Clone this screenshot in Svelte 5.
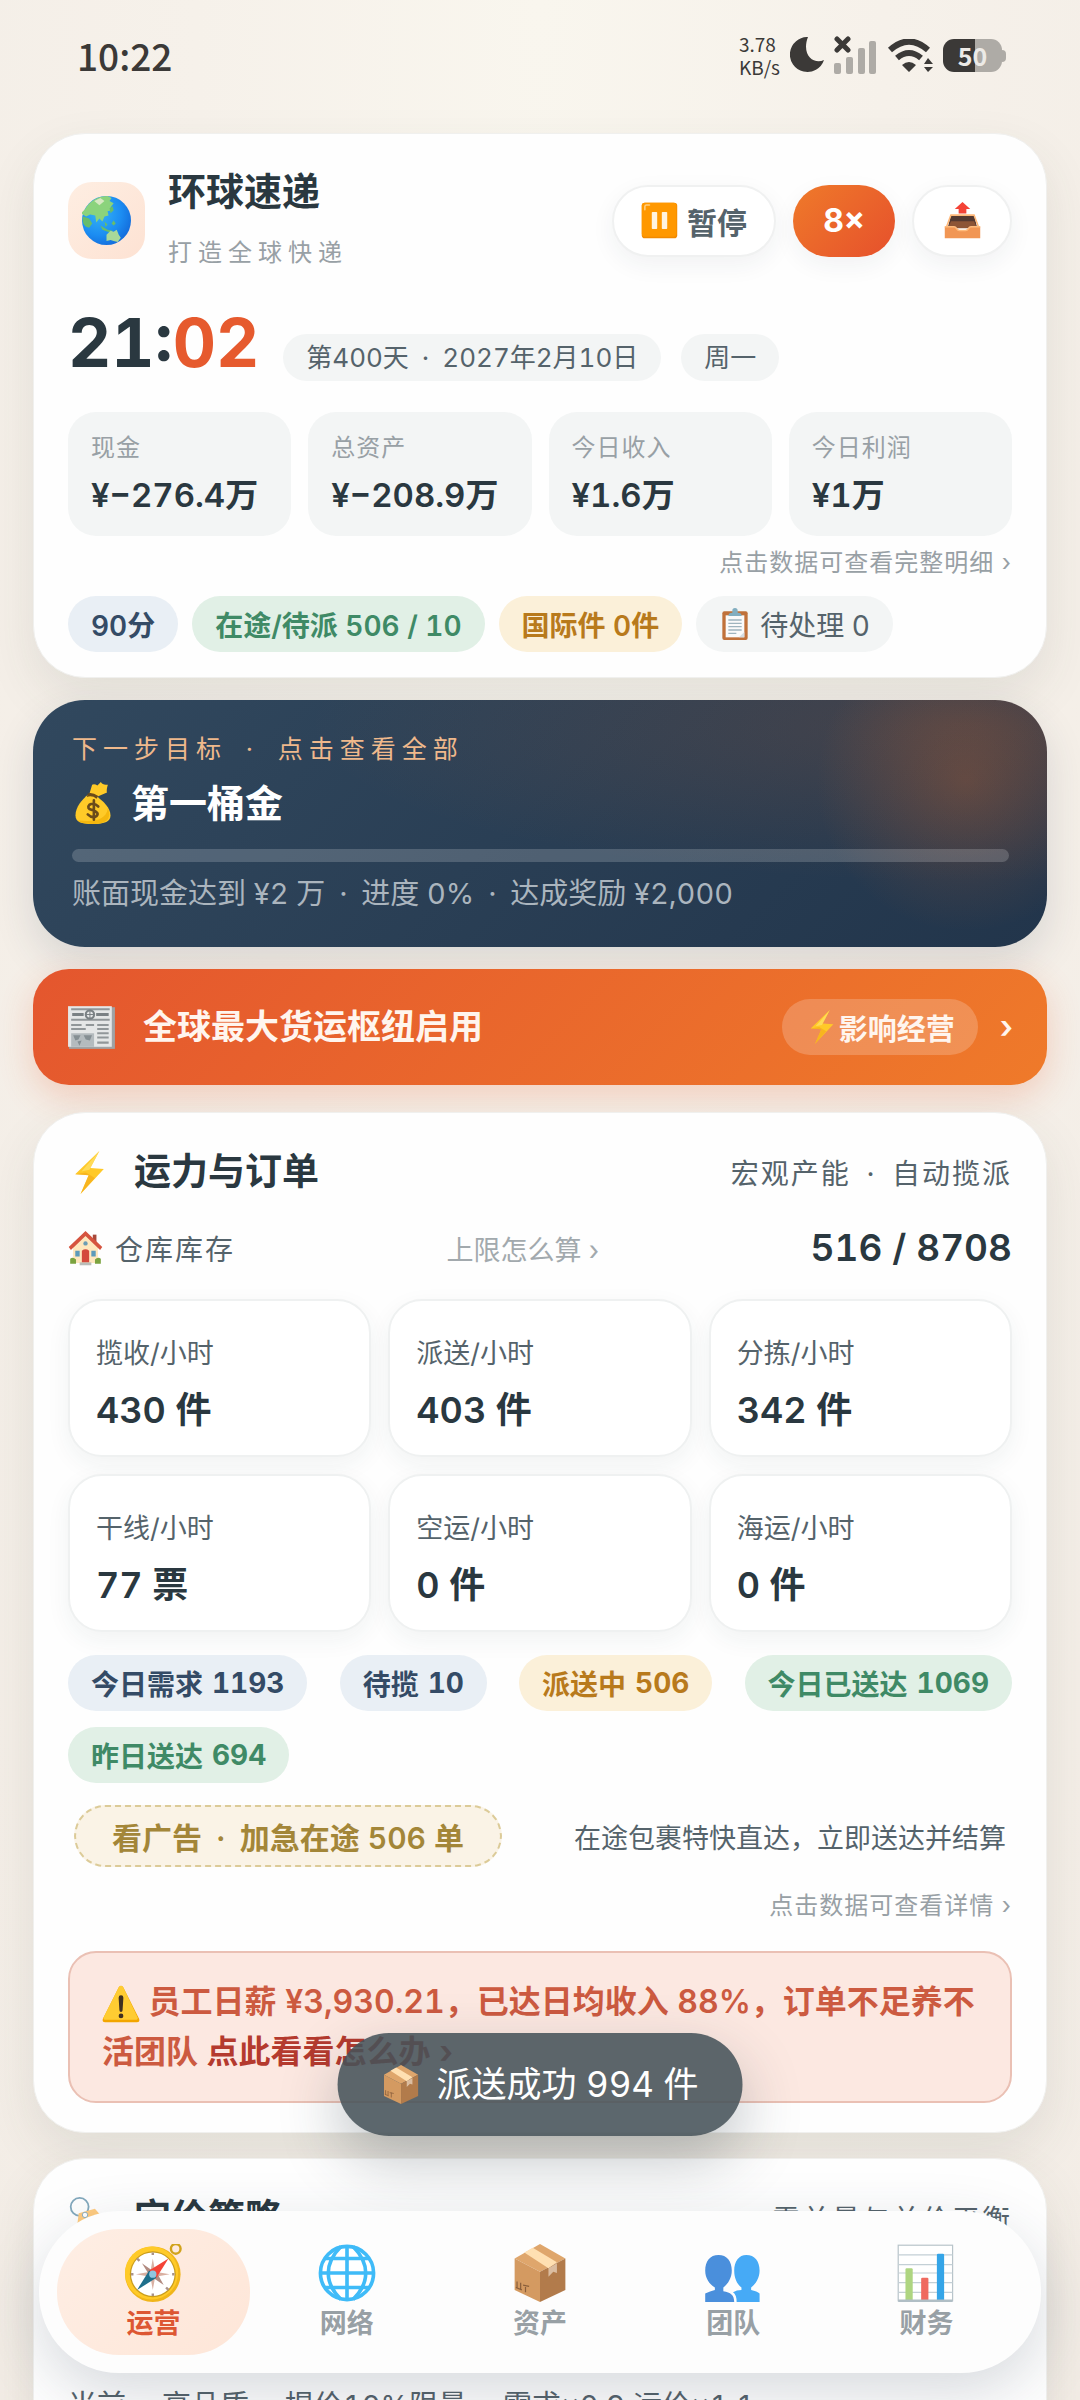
<script lang="ts">
	type Chip = { text: string; value?: string; tone: string };

	let paused = $state(false);
	let activeTab = $state('运营');

	const stats = [
		{ label: '现金', value: '¥−276.4万' },
		{ label: '总资产', value: '¥−208.9万' },
		{ label: '今日收入', value: '¥1.6万' },
		{ label: '今日利润', value: '¥1万' }
	];

	const chips: Chip[] = [
		{ text: '90分', tone: 'blue' },
		{ text: '在途/待派 506 / 10', tone: 'green' },
		{ text: '国际件 0件', tone: 'amber' }
	];

	const capacity = [
		{ label: '揽收/小时', value: '430 件' },
		{ label: '派送/小时', value: '403 件' },
		{ label: '分拣/小时', value: '342 件' },
		{ label: '干线/小时', value: '77 票' },
		{ label: '空运/小时', value: '0 件' },
		{ label: '海运/小时', value: '0 件' }
	];

	const orders: Chip[] = [
		{ text: '今日需求', value: '1193', tone: 'blue' },
		{ text: '待揽', value: '10', tone: 'blue' },
		{ text: '派送中', value: '506', tone: 'amber' },
		{ text: '今日已送达', value: '1069', tone: 'green' },
		{ text: '昨日送达', value: '694', tone: 'green' }
	];

	const tabs = [
		{ name: '运营', icon: 'compass' },
		{ name: '网络', icon: 'meridians' },
		{ name: '资产', icon: 'package' },
		{ name: '团队', icon: 'people' },
		{ name: '财务', icon: 'chart' }
	];

	let progress = 0;
</script>

{#snippet dot()}<i class="dot">·</i>{/snippet}

{#snippet icon(name: string, size: number)}
	<svg class="icon" width={size} height={size} viewBox="0 0 48 48" aria-hidden="true">
		{#if name === 'earth'}
			<defs>
				<radialGradient id="sea" cx="0.35" cy="0.35" r="0.75">
					<stop offset="0" stop-color="#35b4f5" />
					<stop offset="0.6" stop-color="#1c8df2" />
					<stop offset="1" stop-color="#1267d8" />
				</radialGradient>
			</defs>
			<circle cx="24" cy="24" r="24" fill="url(#sea)" />
			<path fill="#8bd37c" d="M3 13C8 4 17 0 25 0l4 2-2 3 4 2-3 4 1 3-4 1 1 4-4 1-2 5-3-3-3 4-1-7-5-1-4 2-5-3z" />
			<path fill="#68bd6a" d="M1 20l6 2 3 5-3 4-3-1C1 28 0 24 1 20zM27 12l3-2 1 4-3 3zM22 25l3 3-2 2zM18 29l7 4 5 1-2 2-8-3zM31 24l2 3-2 2-2-2z" />
			<path fill="#a9d89a" d="M24 38l4-4 3 1 3-2 2 5 2 3-3 4-4-1-3-1-4 1z" />
			<path fill="#d7e8c2" d="M12 5l6-3 4 3-5 4z" />
		{:else if name === 'pause'}
			<rect x="1" y="1" width="46" height="46" rx="4" fill="#f18a00" />
			<rect x="1" y="1" width="45" height="44" rx="4" fill="#ff9800" />
			<path d="M5 10V6q0-2 2-2h4" stroke="#ffcf83" stroke-width="2" fill="none" stroke-linecap="round" />
			<rect x="14" y="13" width="7" height="22" rx="1" fill="#fff3df" />
			<rect x="27" y="13" width="7" height="22" rx="1" fill="#fff3df" />
		{:else if name === 'outbox'}
			<path fill="#f44336" d="M24 0l10 9h-5v6H19V9h-5z" />
			<path fill="#543930" d="M9 17h30l4 16H5z" />
			<path fill="#8d5536" d="M9 25h30l4 9H5z" />
			<path fill="none" stroke="#ffb878" stroke-width="2" d="M3 33l6-16h30l6 16" />
			<path fill="#f19654" d="M1 32h12q2 0 3 2 2 3 4 3h8q2 0 4-3 1-2 3-2h12v15H1z" />
			<path fill="none" stroke="#ffbb7c" stroke-width="2" d="M1 32h12q2 0 3 2 2 3 4 3h8q2 0 4-3 1-2 3-2h12" />
		{:else if name === 'clipboard'}
			<rect x="5" y="5" width="38" height="43" rx="3" fill="#c0713a" />
			<path fill="#fafafa" d="M10 11h28v33H10z" />
			<path fill="#d5dde2" d="M30 44l8-8v8z" />
			<path fill="#82aec0" d="M14 12q0-5 6-5V4q0-4 4-4t4 4v3q6 0 6 5z" />
			<path stroke="#9fb4be" stroke-width="2" d="M14 18h20M14 23h20M14 28h20M14 33h20M14 38h12" />
		{:else if name === 'money'}
			<path fill="#ffca28" d="M26 15c10 6 18 15 18 23 0 7-6 10-20 10S4 46 4 38c0-9 7-18 15-24z" />
			<path fill="#f5b70f" d="M41 30c4 10 1 18-17 18-8 0-14-1-17-4 20 2 32-1 34-14z" />
			<path fill="#ffca28" d="M20 13l3-10q3-1 6 1l4-4q2 4 8 3-2 6-1 9l-12 5z" />
			<path fill="#6b4b1a" d="M18 13q5-2 12 3l-2 3q-5-4-11-2z" />
			<path fill="none" stroke="#6b4b1a" stroke-width="3" stroke-linecap="round" d="M30 28q-5-5-10-2-4 4 3 6 9 3 5 7-5 3-10-2M25 21v22" />
		{:else if name === 'news'}
			<rect x="2" y="5" width="44" height="40" fill="#9fa3a5" />
			<rect x="1" y="4" width="42" height="39" fill="#e5e7e7" />
			<path stroke="#919799" stroke-width="2" d="M4 7h37M4 17h37M4 22h10M4 26h14M29 22h11M29 26h11M18 22h8M29 30h11M29 34h11M29 39h11" />
			<path stroke="#7a8184" stroke-width="3" d="M5 12h11M28 12h12" />
			<circle cx="22" cy="12" r="4" fill="#e5e7e7" stroke="#7a8184" stroke-width="2" />
			<path stroke="#7a8184" d="M18 12h8M22 8v8" />
			<path fill="#b4bbbe" d="M4 30h22v13H4z" />
			<path fill="#858f93" d="M6 32h7l-2 4-3 1zM16 32h8l-2 5-4-1zM10 38l4-1-2 5z" />
		{:else if name === 'bolt'}
			<path fill="#ffc928" d="M35 0L8 26l15 1-9 21 26-28-15-1z" />
			<path fill="#f4a817" d="M8 26l15 1-9 21 16-18-10-6z" opacity="0.6" />
			<path fill="#ffe36b" d="M35 0L15 23l9-2z" opacity="0.7" />
		{:else if name === 'house'}
			<path fill="#a8493b" d="M34 5h5v12h-5z" />
			<path fill="#ffe7bd" d="M7 22L24 6l17 16v22H7z" />
			<path fill="#d6543f" d="M24 0L1 22l3 4L24 7l20 19 3-4z" />
			<path fill="#7ba33f" d="M3 38q4-3 8 1v6H3zM37 39q4-4 8-1v7h-8z" />
			<path fill="#b9bdb9" d="M16 43h16v4H16z" />
			<path fill="#d4493c" d="M19 27q5-4 10 0v16H19z" />
			<circle cx="24" cy="17" r="3" fill="#6c9db4" />
			<path fill="#5d9bbb" d="M10 27h6v8h-6zM32 27h6v8h-6z" />
		{:else if name === 'warning'}
			<path fill="#f2a600" d="M24 1q2 0 3 2l20 40q1 4-3 4H4q-4 0-3-4L21 3q1-2 3-2z" />
			<path fill="#ffcc32" d="M24 1q2 0 3 2l18 38q1 3-3 3H5q-4 0-3-3L21 3q1-2 3-2z" />
			<path fill="#403020" d="M21 16q0-3 3-3t3 3l-1 16q0 2-2 2t-2-2z" />
			<circle cx="24" cy="39" r="3" fill="#403020" />
		{:else if name === 'package'}
			<path fill="#dfa66c" d="M24 0l21 12-21 11L3 12z" />
			<path fill="#d49a61" d="M3 12l21 11v25L3 38z" />
			<path fill="#b27b4b" d="M45 12L24 23v25l21-10z" />
			<path fill="#ffe0b2" d="M18 3l-7 4 20 13 7-5z" />
			<path fill="#dbbda1" d="M31 20l7-4v8l-3-1-4 4z" />
			<path fill="none" stroke="#8a5f3c" d="M5 31v5M8 32v5M4 36l5 2M12 34v6M10 34l5 1" />
		{:else if name === 'tag'}
			<circle cx="13" cy="11" r="10" fill="none" stroke="#83a9bd" stroke-width="2" />
			<path fill="#ffcc80" d="M12 18l18-5 14 16-10 17-24-12z" />
			<circle cx="19" cy="20" r="3" fill="#fff" stroke="#83a9bd" />
		{:else if name === 'compass'}
			<circle cx="42" cy="4" r="4" fill="none" stroke="#d1a31c" stroke-width="2" />
			<circle cx="23" cy="25" r="23" fill="#f0b51a" />
			<circle cx="22" cy="24" r="22" fill="#ffca28" />
			<circle cx="23" cy="25" r="19" fill="#c99d1c" />
			<circle cx="23" cy="25" r="18" fill="#fff" />
			<path fill="#d9b0a2" d="M23 12l2 11 12 2-12 2-2 11-2-11-12-2 12-2z" />
			<path fill="#b28b80" d="M14 16l10 7-3 4zM32 34l-10-7 4-4z" />
			<path fill="#f44336" d="M36 12L26 28l-6-6z" />
			<path fill="#1f6f8b" d="M10 38l10-16 6 6z" />
			<circle cx="23" cy="25" r="3" fill="#8fc6e0" />
			<path stroke="#a99288" stroke-width="2" d="M23 7v2M23 41v2M5 25h2M39 25h2M10 12l2 2M34 36l2 2" />
		{:else if name === 'meridians'}
			<circle cx="24" cy="24" r="22" fill="#fff" stroke="#3fbbf8" stroke-width="3" />
			<path fill="none" stroke="#3fbbf8" stroke-width="3" d="M24 2v44M2 24h44M6 12h36M6 36h36M19 2C5 16 5 32 19 46M29 2c14 14 14 30 0 44" />
		{:else if name === 'people'}
			<path fill="#4a8fdc" d="M12 9c7 0 11 5 11 13 0 6-3 11-7 14v3c6 1 9 3 9 9H1v-7q4-2 8-3v-2C4 33 1 28 1 22 1 14 5 9 12 9z" />
			<path fill="#46aaf6" d="M35 9c7 0 11 5 11 13 0 6-3 11-7 14v2q5 1 7 3v7H27q0-6-3-8 3-2 7-2v-2c-4-3-6-8-6-14 0-8 4-13 10-13z" />
		{:else if name === 'chart'}
			<rect x="1" y="1" width="45" height="46" fill="#fff" stroke="#b8c4ca" />
			<path stroke="#c4d0d6" d="M1 9h45M1 17h45M1 24h45M1 32h45M1 40h45" />
			<path fill="#aed581" d="M7 21q0-1 1-1h4q1 0 1 1v26H7z" />
			<path fill="#ef6a60" d="M20 29q0-1 1-1h4q1 0 1 1v18h-6z" />
			<path fill="#35a5e8" d="M33 9q0-1 1-1h4q1 0 1 1v38h-6z" />
			<path stroke="#b0bec5" stroke-width="2" d="M1 47h45" />
		{/if}
	</svg>
{/snippet}

<div class="screen">
	<div class="status-bar">
		<span class="status-time">10:22</span>
		<div class="status-icons">
			<span class="net-speed">3.78<br />KB/s</span>
			<svg width="34" height="36" viewBox="0 0 34 36" aria-hidden="true">
				<path fill="#3b3937" d="M18 0a17.500 17.500 0 1 0 16 23C24 28 11 18 18 0z" />
			</svg>
			<svg width="43" height="38" viewBox="0 0 43 38" aria-hidden="true">
				<path d="M3 3l11 11M14 3L3 14" stroke="#3b3937" stroke-width="5" stroke-linecap="round" />
				<g fill="#aeaba6">
					<rect x="0" y="27" width="7" height="11" rx="2" />
					<rect x="12" y="21" width="7" height="17" rx="2" />
					<rect x="24" y="12" width="7" height="26" rx="2" />
					<rect x="35" y="5" width="7" height="33" rx="2" />
				</g>
			</svg>
			<svg width="46" height="33" viewBox="0 0 46 33" aria-hidden="true">
				<path d="M3 11q19-17 38 0M10 19q12-10 24 0" fill="none" stroke="#3b3937" stroke-width="6" />
				<path fill="#3b3937" d="M15 26q7-6 14 0l-7 7zM37 25l4-6 5 6zM37 28h9l-5 5z" />
			</svg>
			<div class="battery"><span>50</span></div>
		</div>
	</div>

	<main>
		<section class="card overview">
			<header class="brand">
				<div class="logo">{@render icon('earth', 49)}</div>
				<div class="brand-text">
					<h1>环球速递</h1>
					<p>打造全球快递</p>
				</div>
				<div class="controls">
					<button class="control" onclick={() => (paused = !paused)}>
						{@render icon('pause', 37)}{paused ? '继续' : '暂停'}
					</button>
					<button class="control speed">8×</button>
					<button class="control share" aria-label="导出">{@render icon('outbox', 37)}</button>
				</div>
			</header>

			<div class="clock-row">
				<div class="clock">21:<span>02</span></div>
				<span class="date">第400天 {@render dot()} 2027年2月10日</span>
				<span class="date">周一</span>
			</div>

			<div class="stats">
				{#each stats as stat}
					<button class="stat">
						<span>{stat.label}</span>
						<strong>{stat.value}</strong>
					</button>
				{/each}
			</div>
			<p class="hint">点击数据可查看完整明细 ›</p>

			<div class="chips">
				{#each chips as chip}
					<span class="chip {chip.tone}">{chip.text}</span>
				{/each}
				<span class="chip plain">{@render icon('clipboard', 32)}待处理 0</span>
			</div>
		</section>

		<section class="goal">
			<p class="goal-label">下一步目标 {@render dot()} 点击查看全部</p>
			<h2>{@render icon('money', 42)}第一桶金</h2>
			<div class="track"><div class="fill" style="width: {progress}%"></div></div>
			<p class="goal-text">
				账面现金达到 ¥2 万 {@render dot()} 进度 {progress}% {@render dot()} 达成奖励 ¥2,000
			</p>
		</section>

		<button class="news">
			{@render icon('news', 50)}
			<span class="news-title">全球最大货运枢纽启用</span>
			<span class="news-tag">{@render icon('bolt', 34)}影响经营</span>
			<span class="arrow">›</span>
		</button>

		<section class="card">
			<header class="card-head">
				<h2>{@render icon('bolt', 43)}运力与订单</h2>
				<span>宏观产能 {@render dot()} 自动揽派</span>
			</header>

			<div class="stock">
				<span class="stock-label">{@render icon('house', 35)}仓库库存</span>
				<a href="#limit">上限怎么算 ›</a>
				<strong>516 / 8708</strong>
			</div>

			<div class="capacity">
				{#each capacity as cell}
					<button class="cell">
						<span>{cell.label}</span>
						<strong>{cell.value}</strong>
					</button>
				{/each}
			</div>

			<div class="chips spread">
				{#each orders as chip}
					<span class="chip {chip.tone}">{chip.text} <b>{chip.value}</b></span>
				{/each}
			</div>

			<div class="ad-row">
				<button class="ad">看广告 {@render dot()} 加急在途 506 单</button>
				<span>在途包裹特快直达，立即送达并结算</span>
			</div>
			<p class="hint detail">点击数据可查看详情 ›</p>

			<div class="alert">
				{@render icon('warning', 38)} 员工日薪 ¥3,930.21，已达日均收入 88%，订单不足养不活团队
				<a href="#help">点此看看怎么办 ›</a>
			</div>
		</section>

		<section class="card">
			<header class="card-head">
				<h2>{@render icon('tag', 43)}定价策略</h2>
				<span>需单量与单价平衡</span>
			</header>
			<p class="pricing">
				当前 {@render dot()} 高品质 {@render dot()} 提价10%限量 {@render dot()} 需求×0.9 运价×1.1
			</p>
		</section>
	</main>

	<div class="toast" role="status">{@render icon('package', 39)}派送成功 994 件</div>

	<nav>
		{#each tabs as tab}
			<button class:active={activeTab === tab.name} onclick={() => (activeTab = tab.name)}>
				{@render icon(tab.icon, 58)}
				<span>{tab.name}</span>
			</button>
		{/each}
	</nav>
</div>

<style>
	:global(body) {
		margin: 0;
		background: #f3eee7;
	}

	.screen {
		position: relative;
		height: 100vh;
		overflow: hidden;
		font-family: Inter, 'Noto Sans CJK SC', sans-serif;
		font-variant-numeric: tabular-nums;
		color: #2a3840;
		background: radial-gradient(ellipse at 50% 0, #f9f6ee 0%, #f6f1ea 45%, #f3ede6 100%);
	}

	h1,
	h2,
	p {
		margin: 0;
	}

	button {
		font: inherit;
		font-variant-numeric: tabular-nums;
		color: inherit;
		margin: 0;
		padding: 0;
		border: none;
		background: none;
		cursor: pointer;
	}

	a {
		color: inherit;
		text-decoration: none;
	}

	.icon {
		flex: none;
		vertical-align: middle;
	}

	.dot {
		margin: 0 6px;
		font-style: normal;
	}

	/* Status bar */
	.status-bar {
		display: flex;
		justify-content: space-between;
		align-items: center;
		height: 110px;
		padding: 0 78px 0 77px;
		box-sizing: border-box;
		font-family: 'Noto Sans CJK SC', sans-serif;
		color: #3b3937;
	}

	.status-time {
		font-size: 37px;
		line-height: 56px;
		font-weight: 500;
	}

	.status-icons {
		display: flex;
		align-items: center;
		gap: 10px;
	}

	.net-speed {
		font-size: 19px;
		line-height: 23px;
	}

	.battery {
		position: relative;
		width: 59px;
		height: 33px;
		border-radius: 11px;
		background: linear-gradient(90deg, #3b3937 54%, #aeaba6 54%);
		color: #eceae6;
		font-size: 25px;
		font-weight: 700;
		line-height: 33px;
		text-align: center;
	}

	.battery::after {
		content: '';
		position: absolute;
		right: -4px;
		top: 11px;
		width: 4px;
		height: 12px;
		border-radius: 0 4px 4px 0;
		background: #aeaba6;
	}

	/* Cards */
	main {
		padding: 23px 33px 0;
	}

	.card {
		box-sizing: border-box;
		margin-bottom: 25px;
		padding: 35px 34px 29px;
		border: 1px solid #f0f0ee;
		border-radius: 52px;
		background: #fefefe;
		box-shadow: 0 20px 50px rgba(60, 70, 60, 0.1);
	}

	.overview {
		margin-bottom: 22px;
		padding: 34px 34px 25px;
	}

	.brand {
		display: flex;
		align-items: center;
	}

	.logo {
		display: flex;
		align-items: center;
		justify-content: center;
		width: 77px;
		height: 77px;
		border-radius: 24px;
		background: linear-gradient(135deg, #feeee2, #fde2d3);
	}

	.brand-text {
		flex: 1;
		margin-left: 23px;
	}

	h1 {
		font-size: 38px;
		line-height: 46px;
		font-weight: 700;
	}

	.brand-text p {
		margin-top: 19px;
		font-size: 24px;
		line-height: 40px;
		letter-spacing: 6px;
		color: #98a0a5;
	}

	.controls {
		display: flex;
		gap: 17px;
	}

	.control {
		display: flex;
		align-items: center;
		justify-content: center;
		gap: 9px;
		height: 72px;
		padding: 0 27px;
		border: 2px solid #f0f1f1;
		border-radius: 36px;
		background: #fff;
		box-shadow: 0 8px 24px rgba(40, 50, 60, 0.06);
		color: #55636b;
		font-size: 30px;
		font-weight: 600;
	}

	.control.speed {
		min-width: 102px;
		border: none;
		background: linear-gradient(135deg, #ef7a2a, #e6502c);
		color: #fff;
		font-size: 32px;
		font-weight: 700;
	}

	.control.share {
		min-width: 100px;
	}

	.clock-row {
		display: flex;
		align-items: flex-end;
		gap: 20px;
		margin-top: 32px;
	}

	.clock {
		margin-right: 4px;
		font-size: 67px;
		line-height: 76px;
		font-weight: 700;
	}

	.clock span {
		color: #e65a2e;
	}

	.date {
		padding: 0 23px;
		border-radius: 24px;
		background: #f3f5f5;
		color: #55636b;
		font-size: 26px;
		line-height: 47px;
	}

	.stats {
		display: grid;
		grid-template-columns: repeat(4, 1fr);
		gap: 17px;
		margin-top: 31px;
	}

	.stat {
		display: flex;
		flex-direction: column;
		gap: 6px;
		padding: 18px 23px;
		border-radius: 28px;
		background: #f3f5f5;
		text-align: left;
		white-space: nowrap;
	}

	.stat span {
		font-size: 24px;
		line-height: 36px;
		letter-spacing: 1px;
		color: #98a0a5;
	}

	.stat strong {
		font-size: 33px;
		line-height: 46px;
		font-weight: 600;
	}

	.hint {
		margin-top: 9px;
		font-size: 24px;
		line-height: 36px;
		letter-spacing: 1px;
		text-align: right;
		color: #98a0a5;
	}

	.chips {
		display: flex;
		flex-wrap: wrap;
		gap: 14px;
		margin-top: 15px;
	}

	.chips.spread {
		justify-content: space-between;
		gap: 16px;
		margin-top: 23px;
	}

	.chip {
		display: flex;
		align-items: center;
		gap: 9px;
		height: 56px;
		padding: 0 23px;
		border-radius: 28px;
		font-size: 28px;
		font-weight: 600;
		white-space: nowrap;
	}

	.chip b {
		font-weight: 700;
	}

	.blue {
		background: #e9eff5;
		color: #344b66;
	}

	.green {
		background: #e1f0e6;
		color: #3f8a66;
	}

	.amber {
		background: #fbf0d9;
		color: #b87a1c;
	}

	.plain {
		background: #f3f5f5;
		color: #55636b;
		font-weight: 400;
	}

	/* Next goal */
	.goal {
		margin-bottom: 22px;
		padding: 32px 38px 33px 39px;
		border-radius: 52px;
		background:
			radial-gradient(circle at 92% 33%, rgba(232, 110, 40, 0.24) 0, rgba(232, 110, 40, 0) 150px),
			radial-gradient(ellipse at 92% 10%, rgba(232, 110, 40, 0.16) 0, rgba(232, 110, 40, 0) 50%),
			linear-gradient(135deg, #31485e, #22354b);
		box-shadow: 0 16px 40px rgba(40, 60, 80, 0.14);
		color: #fff;
	}

	.goal-label {
		font-size: 25px;
		line-height: 34px;
		letter-spacing: 6px;
		color: #efb98c;
	}

	.goal h2 {
		display: flex;
		align-items: center;
		gap: 17px;
		margin-top: 14px;
		font-size: 38px;
		line-height: 46px;
		font-weight: 700;
	}

	.track {
		height: 13px;
		margin-top: 23px;
		border-radius: 7px;
		background: rgba(255, 255, 255, 0.18);
	}

	.fill {
		height: 100%;
		border-radius: 7px;
		background: #ef7a2a;
	}

	.goal-text {
		margin-top: 12px;
		font-size: 29px;
		line-height: 40px;
		color: #abb5be;
	}

	/* News banner */
	.news {
		display: flex;
		align-items: center;
		width: 100%;
		margin-bottom: 27px;
		padding: 30px 34px;
		border-radius: 36px;
		background: linear-gradient(135deg, #e4562e, #ef7a2a);
		box-shadow: 0 12px 34px rgba(230, 90, 46, 0.24);
		color: #fff5ee;
	}

	.news-title {
		flex: 1;
		margin-left: 26px;
		font-size: 34px;
		line-height: 48px;
		font-weight: 700;
		text-align: left;
	}

	.news-tag {
		display: flex;
		align-items: center;
		height: 56px;
		padding: 0 23px;
		border-radius: 28px;
		background: rgba(255, 255, 255, 0.2);
		font-size: 29px;
		font-weight: 600;
	}

	.arrow {
		margin-left: 22px;
		font-size: 32px;
		line-height: 48px;
		font-weight: 600;
	}

	/* Capacity card */
	.card-head {
		display: flex;
		justify-content: space-between;
		align-items: center;
	}

	.card-head h2 {
		display: flex;
		align-items: center;
		gap: 23px;
		font-size: 37px;
		line-height: 48px;
		font-weight: 700;
	}

	.card-head > span,
	.stock-label {
		font-size: 28px;
		letter-spacing: 2px;
		color: #55636b;
	}

	.stock {
		display: flex;
		justify-content: space-between;
		align-items: center;
		margin-top: 29px;
	}

	.stock-label {
		display: flex;
		align-items: center;
		gap: 12px;
	}

	.stock a {
		font-size: 27px;
		color: #a2a9ad;
	}

	.stock strong {
		font-size: 37px;
		line-height: 46px;
		font-weight: 600;
	}

	.capacity {
		display: grid;
		grid-template-columns: repeat(3, 1fr);
		gap: 17px;
		margin-top: 28px;
	}

	.cell {
		display: flex;
		flex-direction: column;
		gap: 15px;
		padding: 35px 26px 22px;
		border: 2px solid #eff1f1;
		border-radius: 34px;
		background: #fff;
		box-shadow: 0 8px 24px rgba(40, 60, 70, 0.06);
		text-align: left;
	}

	.cell span {
		font-size: 27px;
		line-height: 36px;
		color: #55636b;
	}

	.cell strong {
		font-size: 36px;
		line-height: 46px;
		font-weight: 600;
	}

	.ad-row {
		display: flex;
		justify-content: space-between;
		align-items: center;
		margin: 22px 6px 0;
	}

	.ad {
		height: 62px;
		padding: 0 36px;
		border: 2px dashed #dccb98;
		border-radius: 31px;
		background: #faf3e6;
		color: #a38638;
		font-size: 30px;
		font-weight: 600;
	}

	.ad-row span {
		font-size: 27px;
		color: #55636b;
	}

	.detail {
		margin-top: 21px;
	}

	.alert {
		margin-top: 27px;
		padding: 24px 32px;
		border: 2px solid #eac0b4;
		border-radius: 28px;
		background: #fce8e1;
		color: #cc5a40;
		font-size: 32px;
		line-height: 50px;
		font-weight: 600;
	}

	.alert a {
		color: #b43a2e;
		font-weight: 700;
	}

	.pricing {
		margin-top: 144px;
		font-size: 29px;
		line-height: 40px;
		color: #55636b;
	}

	/* Toast and bottom tabs float above the page */
	.toast {
		position: absolute;
		bottom: 264px;
		left: 50%;
		transform: translateX(-50%);
		display: flex;
		align-items: center;
		gap: 16px;
		padding: 25px 44px;
		border-radius: 52px;
		background: rgba(69, 82, 89, 0.88);
		box-shadow: 0 24px 60px rgba(40, 55, 65, 0.28);
		color: #fff;
		font-size: 35px;
		line-height: 53px;
		white-space: nowrap;
	}

	nav {
		position: absolute;
		bottom: 27px;
		left: 39px;
		right: 39px;
		display: grid;
		grid-template-columns: repeat(5, 1fr);
		padding: 18px;
		border-radius: 80px;
		background: #fdfdfd;
		box-shadow: 0 20px 60px rgba(40, 55, 75, 0.18);
	}

	nav button {
		display: flex;
		flex-direction: column;
		align-items: center;
		gap: 2px;
		padding: 15px 0 12px;
		border-radius: 62px;
		color: #98a0a5;
	}

	nav span {
		font-size: 27px;
		line-height: 39px;
		font-weight: 600;
	}

	nav .active {
		background: linear-gradient(135deg, #feeee4, #fee6d8);
		color: #dd5733;
	}
</style>
